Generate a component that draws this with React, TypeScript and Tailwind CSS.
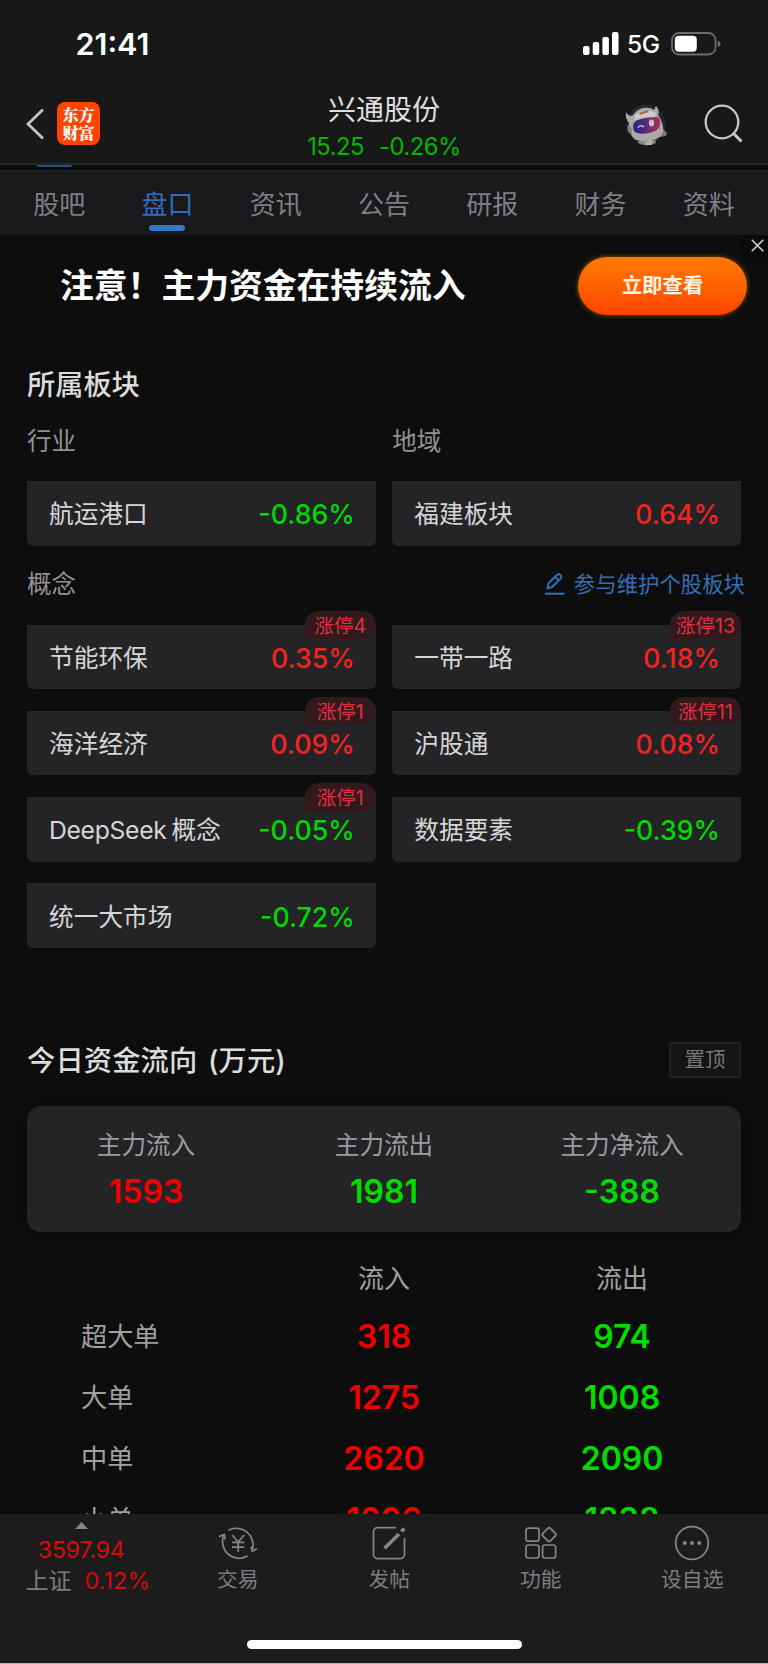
import React from 'react';

const TABS = ['股吧', '盘口', '资讯', '公告', '研报', '财务', '资料'];

interface Sector {
  name: string;
  change: string;
  limitUp?: number;
}

const CONCEPTS: Sector[] = [
  { name: '节能环保', change: '0.35%', limitUp: 4 },
  { name: '一带一路', change: '0.18%', limitUp: 13 },
  { name: '海洋经济', change: '0.09%', limitUp: 1 },
  { name: '沪股通', change: '0.08%', limitUp: 11 },
  { name: 'DeepSeek概念', change: '-0.05%', limitUp: 1 },
  { name: '数据要素', change: '-0.39%' },
  { name: '统一大市场', change: '-0.72%' },
];

const SUMMARY = [
  { label: '主力流入', value: '1593', color: 'text-[#f00000]' },
  { label: '主力流出', value: '1981', color: 'text-[#00dc00]' },
  { label: '主力净流入', value: '-388', color: 'text-[#00dc00]' },
];

const ORDERS = [
  { label: '超大单', inflow: '318', outflow: '974' },
  { label: '大单', inflow: '1275', outflow: '1008' },
  { label: '中单', inflow: '2620', outflow: '2090' },
  { label: '小单', inflow: '1606', outflow: '1838' },
];

const StatusBar = () => (
  <div className="flex h-[82px] items-start justify-between pt-[26px] pr-[47px] pl-[75.5px] text-white">
    <span className="text-[30.5px] leading-[36px] font-semibold">21:41</span>
    <div className="flex h-[35px] items-center">
      <svg width="36" height="23" viewBox="0 0 36 23" fill="#fff">
        <rect x="0" y="14" width="6.5" height="9" rx="2" />
        <rect x="9.7" y="10" width="6.5" height="13" rx="2" />
        <rect x="19.4" y="5" width="6.5" height="18" rx="2" />
        <rect x="29" y="0" width="6.5" height="23" rx="2" />
      </svg>
      <span className="ml-[8px] w-[34px] text-[24.5px] leading-[34px] font-medium tracking-[-0.4px]">5G</span>
      <svg className="ml-[10px]" width="50" height="24" viewBox="0 0 50 24">
        <rect x="1" y="1" width="43.5" height="21.5" rx="7" fill="none" stroke="#6b6b6b" strokeWidth="1.8" />
        <rect x="3.8" y="3.8" width="22" height="16" rx="4" fill="#fff" />
        <path d="M46.7 8.5q3 1 3 3.3t-3 3.3z" fill="#6b6b6b" />
      </svg>
    </div>
  </div>
);

const Robot = () => (
  <svg className="opacity-85" width="44" height="44" viewBox="0 0 44 44">
    <circle cx="22" cy="21" r="19.5" fill="#252b3c" />
    <path d="M17 32q5 3 13-1l2 9q-8 4-16 1l-3-2 4-2z" fill="#a39a9b" />
    <path d="M29 33q6 1 6-5l4-2 4 4-1 3-6 1-6 4z" fill="#8e878a" />
    <path d="M20 35l3 4 5-5v8h-6z" fill="#d0cbcb" />
    <path d="M2 9q2 4 6 4Q15 3 26 5l4 2 2-4q4 4 2 9 6 8 5 17-1 6-13 8-15 3-18-4Q4 28 5 20q-4-5-3-11z" fill="#c9c3c3" />
    <path d="M11 12q10-8 21-2l-1 5q-11-3-21 3z" fill="#eeeaea" />
    <path d="M15 10l8-3 2 2-9 3z" fill="#b9785d" />
    <path d="M4 22q4 1 4 9l-3-1q-3-4-1-8z" fill="#948e91" />
    <path d="M9 23Q9 18 17 16t16-2q4 1 3 8-1 6-11 8t-14-1q-2-2-2-6z" fill="url(#visor)" />
    <path d="M14 25q2-4 6-1" fill="none" stroke="#c9c6ef" strokeWidth="1.6" />
    <ellipse cx="27.5" cy="20" rx="2.6" ry="3.4" fill="#efd9f0" />
    <defs>
      <linearGradient id="visor" x1="0" y1="0" x2="1" y2="0">
        <stop stopColor="#24258f" />
        <stop offset=".5" stopColor="#67308f" />
        <stop offset="1" stopColor="#d03551" />
      </linearGradient>
    </defs>
  </svg>
);

const Header = () => (
  <header className="grid h-[83px] grid-cols-3 border-b-2 border-[#252525]">
    <div className="flex items-start pt-[20px] pl-[25px]">
      <svg className="mt-[6px]" width="20" height="32" viewBox="0 0 20 32" fill="none" stroke="#c4c4c4" strokeWidth="2.8">
        <path d="M18 1.5L3 16l15 14.5" />
      </svg>
      <div className="ml-[12px] flex size-[43px] flex-col items-center justify-center rounded-[8px] bg-[#ff4400] font-['Noto_Serif_CJK_SC','Noto_Sans_CJK_SC',sans-serif] text-[16px] leading-[18px] font-black text-white">
        <span>东方</span>
        <span>财富</span>
      </div>
    </div>
    <div className="flex flex-col items-center pt-[10px]">
      <h1 className="text-[28px] leading-[36px] text-[#dedede]">兴通股份</h1>
      <div className="mt-[3px] flex gap-[15px] text-[23.8px] leading-[32px] tracking-[-0.5px] text-[#00b800]">
        <span>15.25</span>
        <span>-0.26%</span>
      </div>
    </div>
    <div className="flex items-start justify-end gap-[36px] pt-[21px] pr-[25px]">
      <Robot />
      <svg width="39" height="40" viewBox="0 0 39 40" fill="none" stroke="#c8c8c8" strokeWidth="2.3">
        <circle cx="18" cy="19" r="16.3" />
        <path d="M29 30l8.5 8.5" strokeWidth="3" />
      </svg>
    </div>
  </header>
);

const TabBar = () => (
  <>
    <div className="h-[5px] pl-[37px]">
      <div className="h-[2px] w-[35px] rounded-b bg-[#284f7e]" />
    </div>
    <nav className="flex h-[65px] border-t border-[#252527] bg-[#19191b] px-[5px]">
      {TABS.map((tab) => (
        <div key={tab} className="flex flex-1 flex-col items-center pt-[15px]">
          <span className={tab === '盘口' ? 'text-[26px] leading-[38px] text-[#2d6fbd]' : 'text-[26px] leading-[38px] text-[#7f7f83]'}>
            {tab}
          </span>
          {tab === '盘口' && <div className="mt-px h-[6px] w-[36px] rounded-full bg-[#3478c8]" />}
        </div>
      ))}
    </nav>
  </>
);

const Banner = () => (
  <div className="relative flex h-[101px] items-start justify-between pt-[22px] pr-[21px] pl-[60px]">
    <span className="pt-px text-[33.8px] leading-[56px] font-bold whitespace-nowrap text-white">注意！主力资金在持续流入</span>
    <button className="h-[58px] w-[169px] rounded-full bg-linear-to-b from-[#ff7a00] to-[#ff4200] text-[20.4px] font-bold text-[#fff3e6] shadow-[0_0_5px_#8a5a00]">
      立即查看
    </button>
    <div className="absolute top-0 right-0 flex h-[30px] w-[28px] justify-end rounded-bl-[20px] bg-[#0a0a0a] pt-[4px] pr-[4px]">
      <svg width="13" height="13" viewBox="0 0 13 13" stroke="#d8d8d8" strokeWidth="1.5">
        <path d="M.7.7l11.6 11.6M12.3.7L.7 12.3" />
      </svg>
    </div>
  </div>
);

const SectorCard = ({ name, change, limitUp }: Sector) => {
  // Latin prefix is set slightly apart from the Chinese part
  const latin = name.match(/^[A-Za-z]+/)?.[0] ?? '';

  return (
    <div className="relative flex h-[64.5px] items-center justify-between rounded-b-[6px] bg-[#242426] pt-[2px] pr-[21px] pl-[22px]">
      <span className="text-[24.7px] leading-[36px] text-[#d6d6d6]">
        {latin && <span className="mr-[5px] tracking-[-0.3px]">{latin}</span>}
        {name.slice(latin.length)}
      </span>
      <span
        className={
          change.startsWith('-')
            ? 'text-[26.7px] leading-[36px] font-[550] text-[#00d800]'
            : 'text-[26.7px] leading-[36px] font-[550] text-[#f52222]'
        }
      >
        {change}
      </span>
      {limitUp && (
        <span className="absolute -top-[14px] right-0 h-[28.5px] w-[71px] rounded-[14px] rounded-bl-none bg-[#32191c] text-center text-[19.5px] leading-[30px] text-[#e03040]">
          涨停{limitUp}
        </span>
      )}
    </div>
  );
};

const Sectors = () => (
  <section className="px-[27px] pt-[29px]">
    <h2 className="text-[28.2px] leading-[40px] font-medium text-[#dcdcdc]">所属板块</h2>
    <div className="mt-[18px] grid grid-cols-2 gap-x-[16.5px] text-[24.5px] leading-[36px] text-[#929292]">
      <span>行业</span>
      <span>地域</span>
    </div>
    <div className="mt-[22px] grid grid-cols-2 gap-x-[16.5px]">
      <SectorCard name="航运港口" change="-0.86%" />
      <SectorCard name="福建板块" change="0.64%" />
    </div>
    <div className="mt-[20.5px] flex h-[36px] items-center justify-between">
      <span className="text-[24.5px] leading-[36px] text-[#929292]">概念</span>
      <a className="-mr-[4px] flex items-center gap-[8px] text-[21.4px] leading-[36px] text-[#3070b6]">
        <svg width="22" height="22" viewBox="0 0 22 22" fill="none" stroke="#3070b6" strokeWidth="2" strokeLinejoin="round">
          <path d="M3.5 15.5l1-5.2L13 1.8q1.7-1.4 3.4.2 1.7 1.7.3 3.4l-8.5 8.6zM11.3 4.1l3.2 3.2" />
          <path d="M1 20.7h19.5" />
        </svg>
        参与维护个股板块
      </a>
    </div>
    <div className="mt-[22.5px] grid grid-cols-2 gap-x-[16.5px] gap-y-[21.8px]">
      {CONCEPTS.map((sector) => (
        <SectorCard key={sector.name} {...sector} />
      ))}
    </div>
  </section>
);

const MoneyFlow = () => (
  <section className="px-[27px] pt-[93px]">
    <div className="flex h-[38px] items-center justify-between">
      <h2 className="pt-[2px] text-[28.3px] leading-[38px] font-medium tracking-[0.1px] [word-spacing:3px] text-[#dcdcdc]">
        今日资金流向 (万元)
      </h2>
      <button className="h-[36px] w-[72px] rounded-[3px] border-2 border-[#222222] bg-[#141414] text-[20.5px] leading-[32px] text-[#77777a]">
        置顶
      </button>
    </div>
    <div className="mt-[27.5px] grid h-[125.5px] grid-cols-3 rounded-[14px] bg-[#242426] pt-[21px] text-center shadow-[0_2px_18px_#0a0a0a]">
      {SUMMARY.map((item) => (
        <div key={item.label}>
          <div className="text-[24.6px] leading-[36px] text-[#9c9ca0]">{item.label}</div>
          <div className={`mt-[9px] text-[32px] leading-[40px] font-semibold ${item.color}`}>{item.value}</div>
        </div>
      ))}
    </div>
    <div className="mt-[29.5px] grid grid-cols-3 text-center text-[26px] leading-[36px] text-[#a0a0a0]">
      <span />
      <span>流入</span>
      <span>流出</span>
    </div>
    <div className="mt-[9.5px]">
      {ORDERS.map((row) => (
        <div key={row.label} className="grid h-[61px] grid-cols-3 items-center text-center text-[32px] leading-[40px] font-semibold">
          <span className="pl-[54px] text-left text-[26.2px] font-normal text-[#a0a0a0]">{row.label}</span>
          <span className="text-[#f00000]">{row.inflow}</span>
          <span className="text-[#00dc00]">{row.outflow}</span>
        </div>
      ))}
    </div>
  </section>
);

const NAV_ITEMS = [
  {
    label: '交易',
    icon: (
      <>
        <path d="M10.4 6.2A16.8 16.8 0 0 1 34.5 25.4M29.6 32A16.8 16.8 0 0 1 5.6 11.2" />
        <path d="M1 12.6l5.3-2.1.8 5M39 24.7l-4.8 2.5-1-4.5" />
        <path d="M14.2 11l6 7 6-7M20.2 18v10M14 18.4h12.4M14 23.2h12.4" />
      </>
    ),
  },
  {
    label: '发帖',
    icon: (
      <>
        <path d="M27 3.6H8.5a4 4 0 0 0-4 4v23a4 4 0 0 0 4 4h23a4 4 0 0 0 4-4V14" />
        <path d="M15.5 24.3L30 10M32.3 7.5l3-3" strokeWidth="3.6" />
      </>
    ),
  },
  {
    label: '功能',
    icon: (
      <>
        <rect x="5" y="4.2" width="13" height="13" rx="2.3" />
        <rect x="5" y="21" width="13" height="13" rx="2.3" />
        <rect x="21.6" y="21" width="13" height="13" rx="2.3" />
        <rect x="22.8" y="5.3" width="10.6" height="10.6" rx="1.8" transform="rotate(45 28.1 10.6)" />
      </>
    ),
  },
  {
    label: '设自选',
    icon: (
      <>
        <circle cx="20" cy="19" r="16.3" />
        <g fill="#85858a" stroke="none">
          <circle cx="12.8" cy="19" r="2" />
          <circle cx="20" cy="19" r="2" />
          <circle cx="27.2" cy="19" r="2" />
        </g>
      </>
    ),
  },
];

const BottomBar = () => (
  <footer className="flex h-[150px] flex-col items-center border-b border-[#b5b5b5] bg-[#1c1c1c]">
    <div className="flex w-full">
      <div className="flex w-[162px] flex-col items-center pt-[8px] text-[23.5px] leading-[30px] text-[#d60a0a]">
        <svg width="13" height="7" viewBox="0 0 13 7" fill="#85858a">
          <path d="M6.5 0L13 7H0z" />
        </svg>
        <span className="mt-[6px] tracking-[-0.4px]">3597.94</span>
        <div className="mt-px flex w-full pl-[25.5px]">
          <span className="w-[59px] text-[23px] text-[#7d7d82]">上证</span>
          <span>0.12%</span>
        </div>
      </div>
      <div className="grid w-[606px] grid-cols-4">
        {NAV_ITEMS.map((item) => (
          <div key={item.label} className="flex flex-col items-center pt-[10px]">
            <svg width="40" height="38" viewBox="0 0 40 38" fill="none" stroke="#85858a" strokeWidth="1.7">
              {item.icon}
            </svg>
            <span className="mt-[3px] text-[20.8px] leading-[30px] text-[#7d7d82]">{item.label}</span>
          </div>
        ))}
      </div>
    </div>
    <div className="mt-auto mb-[14px] h-[9.5px] w-[275px] rounded-full bg-white" />
  </footer>
);

export default function App() {
  return (
    <div className="flex h-[1664px] w-[768px] flex-col overflow-hidden bg-[#0d0d0d] font-['Inter','Noto_Sans_CJK_SC',sans-serif]">
      <div className="bg-[#181818]">
        <StatusBar />
        <Header />
      </div>
      <TabBar />
      <main className="min-h-0 flex-1 overflow-hidden">
        <Banner />
        <Sectors />
        <MoneyFlow />
      </main>
      <BottomBar />
    </div>
  );
}
